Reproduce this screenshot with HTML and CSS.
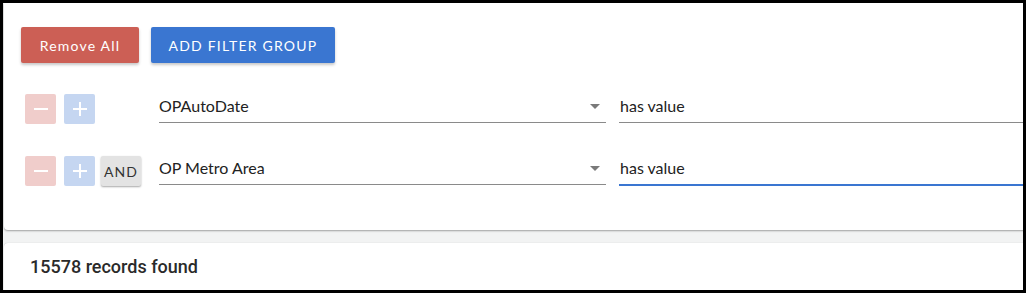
FILE: index.html
```html
<!DOCTYPE html>
<html>
<head>
<meta charset="utf-8">
<link rel="stylesheet" href="styles.css">
</head>
<body>
<div class="frame">
  <div class="panel">
    <div class="actions">
      <button class="btn btn-red">Remove All</button>
      <button class="btn btn-blue">ADD FILTER GROUP</button>
    </div>
    <div class="rows">
      <div class="row">
        <div class="ctrls">
          <span class="sq sq-minus"><svg width="14" height="14" viewBox="0 0 14 14"><rect x="0" y="6" width="14" height="2" fill="#fff"/></svg></span>
          <span class="sq sq-plus"><svg width="14" height="14" viewBox="0 0 14 14"><rect x="0" y="6" width="14" height="2" fill="#fff"/><rect x="6" y="0" width="2" height="14" fill="#fff"/></svg></span>
        </div>
        <div class="field field-select"><span>OPAutoDate</span><span class="arrow"></span></div>
        <div class="field field-value"><span>has value</span></div>
      </div>
      <div class="row">
        <div class="ctrls">
          <span class="sq sq-minus"><svg width="14" height="14" viewBox="0 0 14 14"><rect x="0" y="6" width="14" height="2" fill="#fff"/></svg></span>
          <span class="sq sq-plus"><svg width="14" height="14" viewBox="0 0 14 14"><rect x="0" y="6" width="14" height="2" fill="#fff"/><rect x="6" y="0" width="2" height="14" fill="#fff"/></svg></span>
          <span class="and">AND</span>
        </div>
        <div class="field field-select"><span>OP Metro Area</span><span class="arrow"></span></div>
        <div class="field field-value active"><span>has value</span></div>
      </div>
    </div>
  </div>
  <div class="results">15578 records found</div>
</div>
</body>
</html>
```
FILE: styles.css
```css
html, body {
  margin: 0;
  padding: 0;
  background: #fff;
}
.frame {
  width: 1026px;
  height: 293px;
  box-sizing: border-box;
  border: 3px solid #000;
  background: #f2f3f3;
  overflow: hidden;
}
.panel {
  width: 1100px;
  margin-left: 1px;
  background: #fff;
  border-radius: 0 0 4px 4px;
  box-shadow: 0 1px 2px rgba(0,0,0,0.35);
  padding: 24px 0 44px 17px;
  box-sizing: border-box;
  height: 227px;
}
.actions {
  display: flex;
  gap: 12px;
}
.btn {
  height: 36px;
  border: none;
  border-radius: 2px;
  color: #fff;
  font-family: Lato, "Open Sans", sans-serif;
  font-size: 14px;
  letter-spacing: 1.2px;
  padding: 0 17px;
  box-shadow: 0 2px 3px rgba(0,0,0,0.22);
}
.btn-red {
  background: #cc5f55;
  width: 118px;
}
.btn-blue {
  background: #3a76d1;
  width: 184px;
}
.rows {
  display: flex;
  flex-direction: column;
  gap: 32px;
  margin-top: 31px;
  padding-left: 4px;
}
.row {
  display: flex;
  align-items: flex-start;
  height: 30px;
}
.ctrls {
  width: 134px;
  display: flex;
  gap: 7px;
}
.sq {
  width: 31px;
  height: 30px;
  display: flex;
  align-items: center;
  justify-content: center;
  border-radius: 2px;
}
.sq-minus { background: #f0cdcb; }
.sq-plus { background: #c5d6f1; margin-left: 1px; }
.and {
  width: 40px;
  height: 30px;
  margin-left: -1px;
  background: #e3e3e3;
  border-radius: 2px;
  box-shadow: 0 1px 2px rgba(0,0,0,0.35);
  font-family: Lato, "Open Sans", sans-serif;
  font-size: 14px;
  letter-spacing: 1px;
  color: #333;
  display: flex;
  align-items: center;
  justify-content: center;
}
.field {
  height: 29px;
  box-sizing: border-box;
  border-bottom: 1px solid #8a8a8a;
  display: flex;
  align-items: center;
  padding-bottom: 5px;
  font-family: Lato, "Open Sans", sans-serif;
  font-size: 16px;
  color: #222;
}
.field-select {
  width: 447px;
  justify-content: space-between;
  padding-right: 6px;
}
.field-value {
  width: 447px;
  margin-left: 13px;
  padding-left: 1px;
}
.field-value.active {
  height: 30px;
  border-bottom: 2px solid #3a76d1;
}
.arrow {
  width: 0;
  height: 0;
  border-left: 5px solid transparent;
  border-right: 5px solid transparent;
  border-top: 5px solid #7a7a7a;
  margin-top: 2px;
}
.results {
  margin-top: 13px;
  margin-left: 1px;
  width: 1100px;
  height: 60px;
  background: #fff;
  border-radius: 4px;
  box-shadow: 0 0 1px rgba(0,0,0,0.25);
  box-sizing: border-box;
  padding: 13px 0 0 26px;
  font-family: Roboto, "Liberation Sans", sans-serif;
  font-weight: 500;
  font-size: 18px;
  color: #2a2a2a;
}
```
